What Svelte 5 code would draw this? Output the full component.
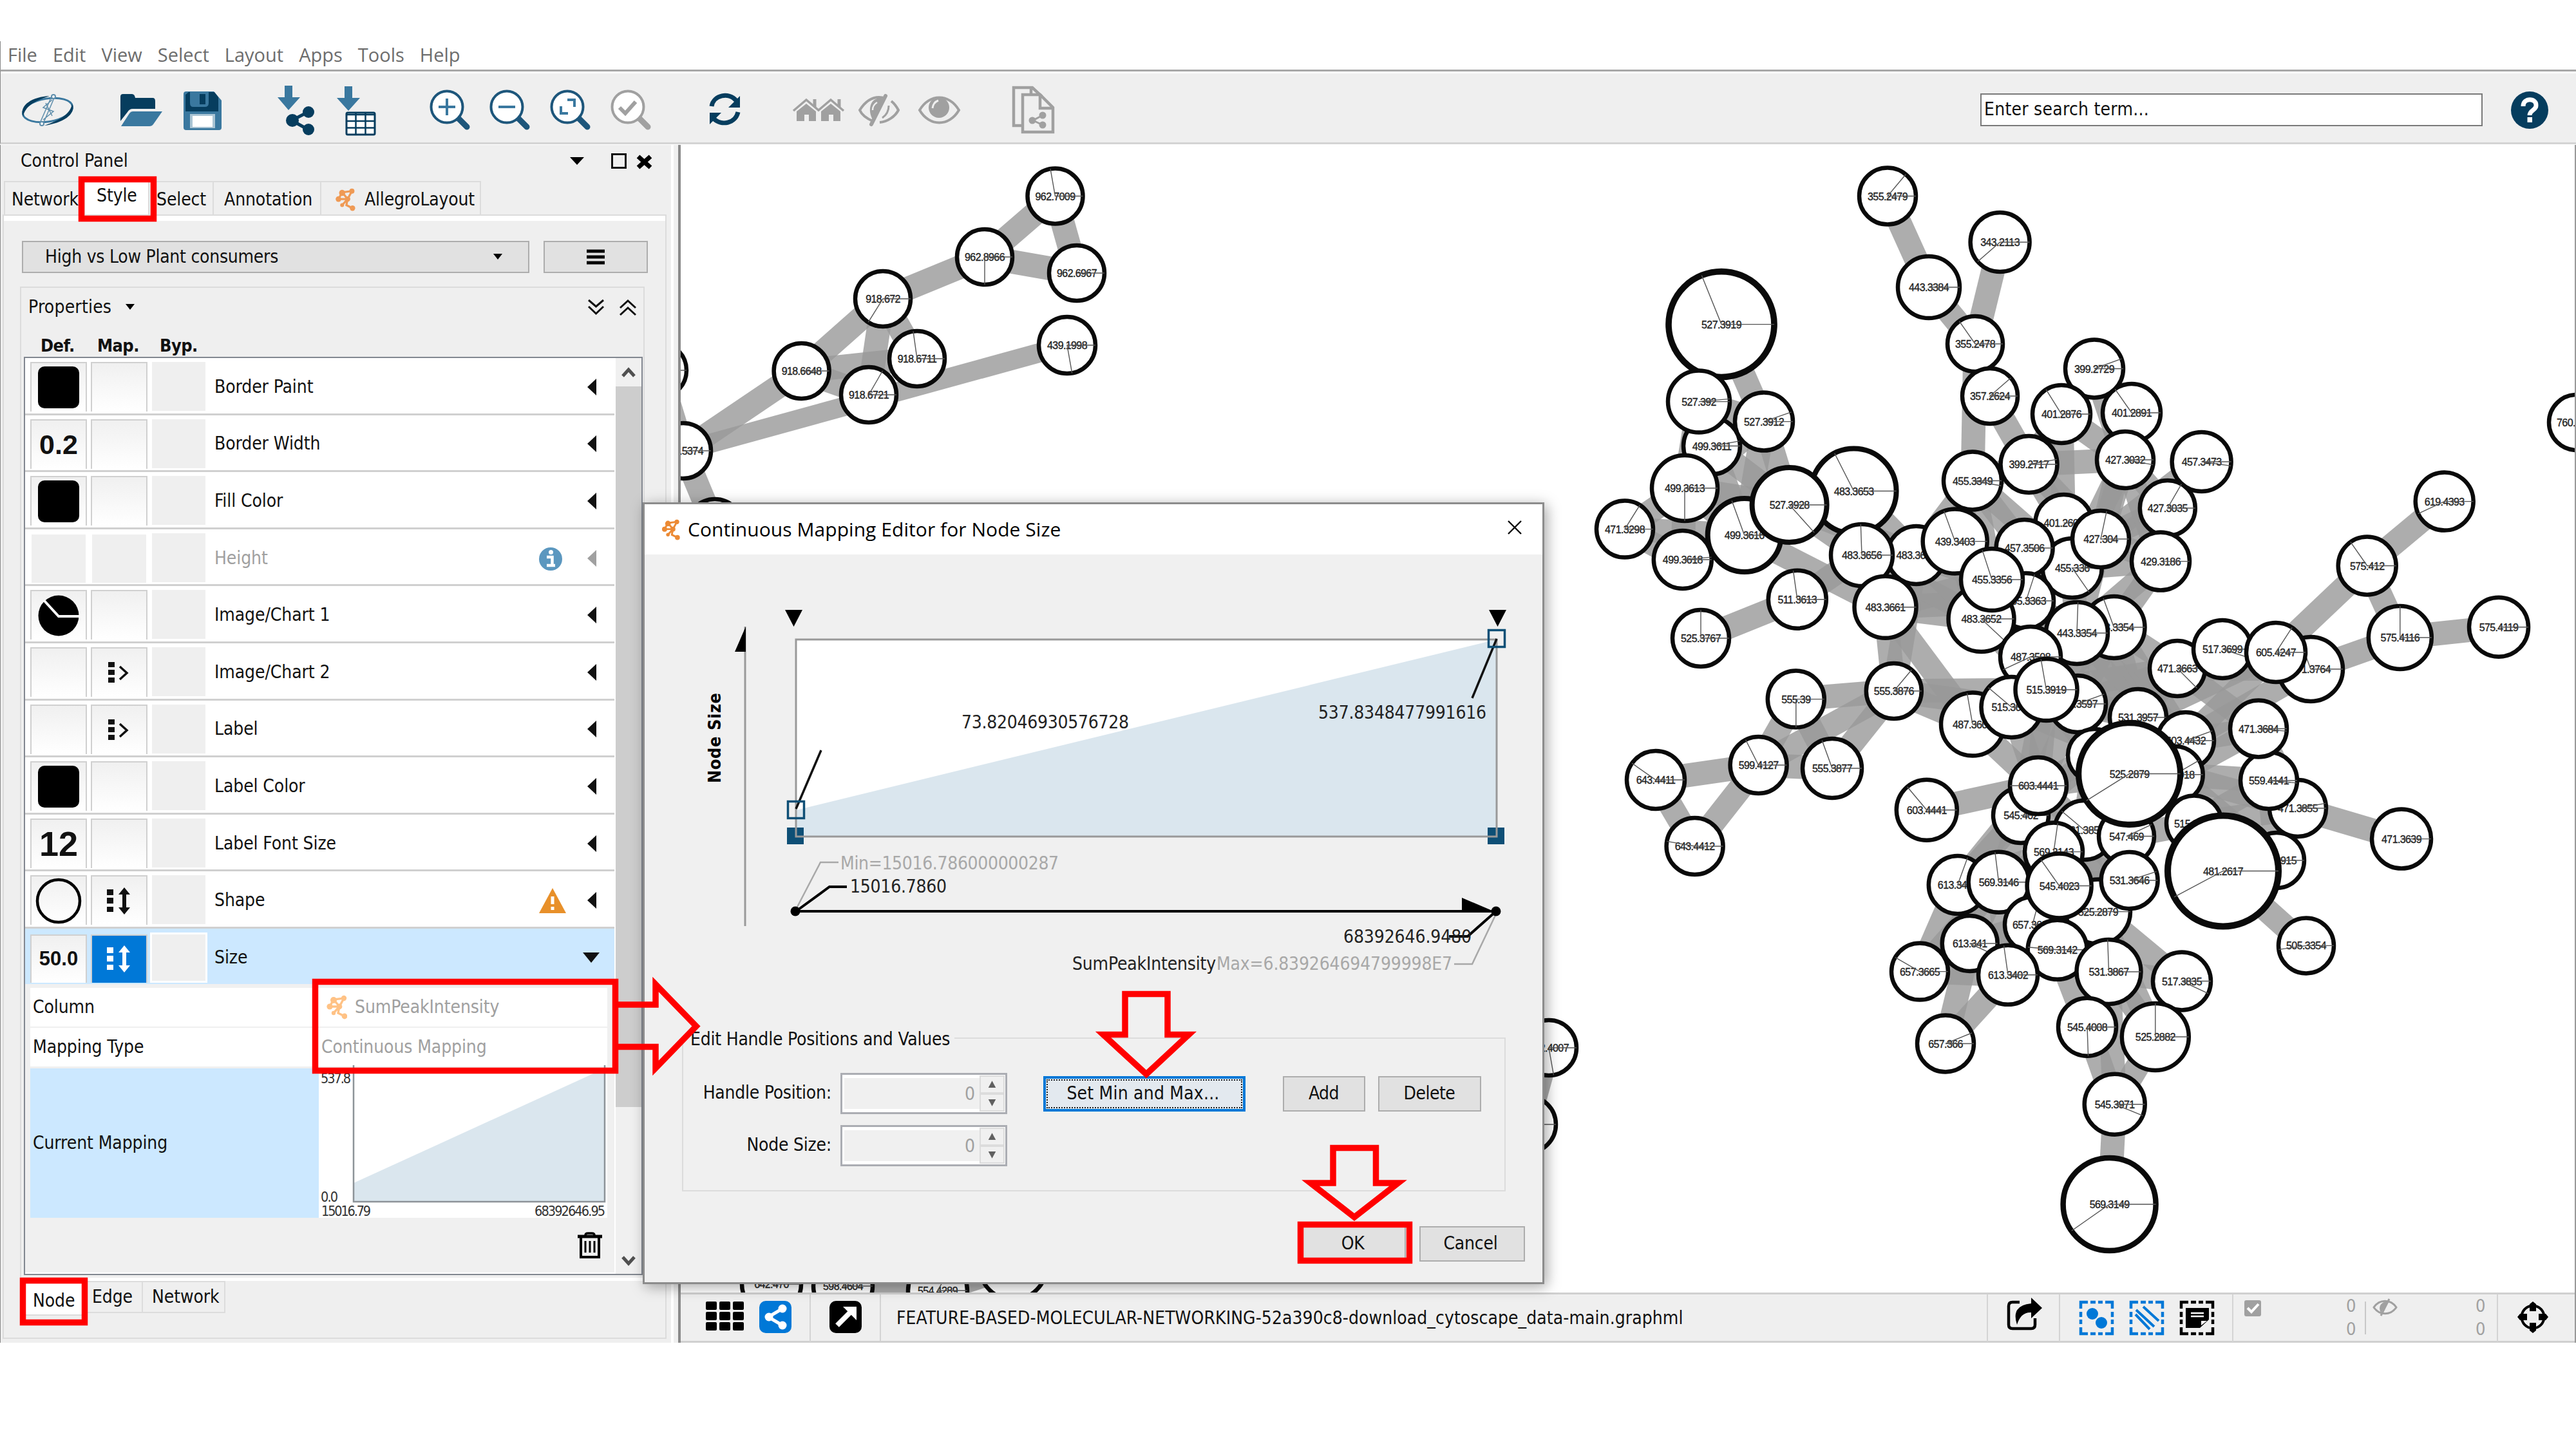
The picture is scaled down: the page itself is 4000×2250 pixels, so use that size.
<script>
  const menus = ['File', 'Edit', 'View', 'Select', 'Layout', 'Apps', 'Tools', 'Help'];

  // def: swatch | pie | circle | text, map: pass (passthrough) or cont (continuous)
  const rows = [
    { name: 'Border Paint', def: 'swatch' },
    { name: 'Border Width', def: 'text', value: '0.2', cls: 'n44' },
    { name: 'Fill Color', def: 'swatch' },
    { name: 'Height', def: 'off', off: true, badge: 'info' },
    { name: 'Image/Chart 1', def: 'pie' },
    { name: 'Image/Chart 2', def: '', map: 'pass' },
    { name: 'Label', def: '', map: 'pass' },
    { name: 'Label Color', def: 'swatch' },
    { name: 'Label Font Size', def: 'text', value: '12', cls: 'n55' },
    { name: 'Shape', def: 'circle', map: 'cont', badge: 'warn' },
    { name: 'Size', def: 'text', value: '50.0', cls: 'n32', map: 'cont', sel: true }
  ];

  // id, label, x, y, radius, angle of the second chart line; order is stacking order
  const nodes = [
    ['a0', '', 1023, 575, 43, 0], ['a9', '', 1110, 818, 43, 0],
    ['a1', '962.7009', 1638.5, 304.5, 43, -100], ['a2', '962.8966', 1529, 399, 43, 90],
    ['a3', '962.6967', 1672, 424, 43, 0], ['a4', '918.672', 1371, 464, 43, 122],
    ['a5', '918.6711', 1424, 557, 43, -98], ['a6', '918.6648', 1244.6, 576, 43, 0],
    ['a7', '918.6721', 1349, 613, 43, -60], ['a8', '439.1998', 1657, 536, 44, 80],
    ['a10', '918.5374', 1061, 700, 43, 0],
    ['z1', '642.470', 1198, 1994, 46, 0], ['z2', '598.4604', 1309, 1997, 46, 0],
    ['z3', '554.4289', 1456, 2004, 46, -60], ['z4', '', 1573, 1966, 52, 0],
    ['z5', '642.4007', 2405, 1627, 43, 80], ['z6', '', 2372, 1746, 44, 0],
    ['b1', '355.2479', 2931, 304.5, 44, -50], ['b2', '343.2113', 3105.6, 376, 46, 139],
    ['b3', '443.3384', 2995, 446, 48, 0], ['b5', '355.2478', 3067, 534, 43, -125],
    ['b6', '357.2624', 3090, 615, 43, -41],
    ['c1', '527.3919', 2673, 503.6, 82, -112], ['c4', '499.3611', 2658, 692.5, 44, -10],
    ['c2', '527.392', 2638, 623.6, 48, -5], ['c3', '527.3912', 2739, 654.6, 45, -19],
    ['c5', '499.3613', 2616, 758, 51, 90], ['c6', '471.3298', 2523, 821.6, 44, -58],
    ['c8', '499.3618', 2612.8, 869, 45, -5], ['c7', '499.3616', 2708.7, 831, 57, -110],
    ['c9', '483.3653', 2878.6, 762.5, 66, -117], ['c10', '527.3928', 2778.6, 784, 58, 48],
    ['d2', '483.3657', 2975.5, 862, 45, 0], ['d1', '483.3656', 2891, 862, 48, -92],
    ['d3', '483.3661', 2927.5, 942.8, 48, 0], ['d4', '511.3613', 2790.8, 930.7, 45, -98],
    ['d5', '525.3767', 2641, 991, 44, -90],
    ['e1', '399.2729', 3252, 572.5, 45, -20], ['e3', '401.2891', 3310, 641, 45, -125],
    ['e2', '401.2876', 3201, 643, 45, -122], ['e4', '399.2717', 3150.5, 721, 44, -10],
    ['e5', '427.3032', 3300, 714, 44, 10], ['e6', '457.3473', 3418.6, 717, 46, 8],
    ['e7', '455.3349', 3063, 746.5, 45, 10], ['e9', '427.3035', 3365.8, 789, 43, -60],
    ['e10', '429.3186', 3355, 871.6, 45, 0],
    ['f1', '401.2607', 3204.5, 812, 44, 0], ['f2', '455.336', 3217.7, 882, 46, 55],
    ['f3', '427.304', 3262, 837, 44, -78], ['f4', '457.3506', 3143.6, 851, 44, 0],
    ['f5', '439.3403', 3035.7, 840.6, 50, -110], ['f6', '455.3363', 3146, 933, 43, -72],
    ['f7', '483.3652', 3076.5, 961, 51, 43], ['f8', '455.3356', 3093, 900, 48, -108],
    ['f10', '443.3354', 3282.5, 974, 48, -110], ['f9', '443.3354', 3225, 983, 48, -88],
    ['f11', '487.3508', 3153, 1020, 47, 155],
    ['g1', '487.3607', 3063, 1124.6, 49, -100], ['g2', '515.3604', 3123.5, 1098, 47, -140],
    ['g3', '515.3597', 3226, 1093, 44, -20], ['g4', '515.3919', 3177.5, 1071, 48, -100],
    ['h1', '471.3663', 3381, 1038, 43, 45], ['h2', '517.3699', 3451, 1008, 45, 18],
    ['h3', '471.3764', 3588, 1039, 50, -110], ['h4', '605.4247', 3534, 1013, 46, -57],
    ['h5', '575.412', 3675.7, 878.5, 45, -125], ['h6', '619.4393', 3795.7, 778.6, 45, 155],
    ['h7', '575.4116', 3726.8, 990, 49, -90], ['h8', '575.4119', 3880, 973.7, 46, 0],
    ['h9', '760.5402', 4001, 656, 43, 0],
    ['i1', '555.39', 2788.8, 1085.6, 44, 90], ['i2', '555.3876', 2940.8, 1073, 43, -50],
    ['i3', '599.4127', 2730.6, 1188, 44, -117], ['i4', '555.3877', 2845, 1193, 46, -110],
    ['i5', '643.4411', 2571, 1211, 45, -145], ['i6', '643.4412', 2631.6, 1314, 44, -170],
    ['i7', '603.4441', 2991.8, 1257.8, 47, -130],
    ['j1', '531.3957', 3320, 1114, 44, 0], ['j2', '603.4432', 3394, 1150, 44, -20],
    ['j3', '', 3252, 1173, 41, 0], ['j4', '515.3918', 3376.7, 1202.7, 44, -30],
    ['j5', '545.402', 3138, 1266, 43, 0], ['j6', '603.4441', 3165, 1220, 44, 180],
    ['j7', '471.3855', 3568, 1255, 44, -10], ['j8', '559.4141', 3523, 1212, 44, 5],
    ['j9', '471.3684', 3507, 1131.5, 44, 5], ['j10', '471.3639', 3729, 1302.6, 46, 0],
    ['k1', '515.3915', 3407, 1278.5, 43, 0], ['k2', '559.3915', 3535, 1336, 43, 0],
    ['k4', '531.3854', 3236.6, 1289, 46, -140], ['k5', '547.469', 3302, 1298.5, 43, -25],
    ['k3', '525.2879', 3306.6, 1201.5, 79, 148],
    ['k6', '569.3143', 3189, 1322.6, 45, -82], ['k7', '525.2879', 3258, 1415.6, 50, 180],
    ['k8', '481.2617', 3452, 1352.5, 86, 152],
    ['l1', '613.3407', 3039.8, 1374, 45, -70], ['l2', '569.3146', 3103.6, 1369.7, 47, -97],
    ['l3', '657.3604', 3156, 1435.7, 43, -75], ['l4', '545.4023', 3197.6, 1375.5, 50, -125],
    ['l5', '531.3646', 3306.6, 1367, 44, -18], ['l6', '613.341', 3058.7, 1465, 43, 25],
    ['l7', '657.3665', 2981, 1508.6, 44, -150], ['l9', '569.3142', 3194.7, 1474.8, 46, -175],
    ['l8', '613.3402', 3118, 1513.8, 46, -98], ['l10', '657.366', 3021, 1620.5, 44, -22],
    ['m1', '531.3867', 3274.5, 1509, 50, -92], ['m2', '517.3835', 3388, 1523.5, 45, 25],
    ['m3', '505.3354', 3581, 1468.4, 43, 172], ['m4', '545.4008', 3241, 1594.7, 45, 88],
    ['m5', '525.2882', 3346.8, 1610, 52, -90], ['m6', '545.3971', 3283.7, 1714.7, 47, 22],
    ['m7', '569.3149', 3275.6, 1870, 72, 145]
  ];

  const at = Object.fromEntries(nodes.map((n) => [n[0], n]));

  const links = `a1-a2 a1-a3 a2-a3 a2-a4 a4-a6 a4-a7 a4-a5 a6-a5 a6-a7 a6-a10 a0-a10 a10-a9
    z2-z3 z3-z4 z5-z6
    b1-b3 b3-b5 b2-b5 b5-b6 b5-e7 b6-e4
    c1-c2 c1-c3 c2-c3 c2-c4 c3-c4 c4-c5 c3-c5 c3-c10 c4-c10 c5-c10 c5-c7 c5-c6 c5-c8 c6-c8 c7-c8 c7-c10 c4-c7 c3-c7 c2-c5 c6-c7
    c9-c10 c9-d1 c10-d1 c10-d2 c7-d3 c9-d2 d1-d3 d2-d3 d4-d5 d4-d1 d3-i2 d2-i2 d3-g1 d3-f7
    d3-f8 d3-f6 d1-f7 d1-f5 d2-f8 d2-f7 f5-f7 f5-f8 e7-f5 e7-d2 e7-f4 e7-f8 e7-f2
    e1-e5 e1-e2 e1-e3 e2-e5 e2-e4 e2-f1 e3-e5 e3-f3 e4-e5 e4-e7 e4-f1 e4-f3 e5-f3 e5-e9 e6-e9 e6-f3
    e9-f3 e9-e10 e9-f2 e10-f3 e10-f2 e10-f10 e10-f9 e5-e10 e5-f2 f1-f4 f1-f2 f2-f4 f2-f6 f2-f9 f3-f9 f3-f6 f4-f6 f4-f8 f2-f8
    f6-f7 f6-f9 f6-f11 f7-f11 f7-f9 f8-f9 f9-f11 f10-g4 f10-g3 f10-j1 f9-g3 f9-g4 f11-g4 f11-g2 f7-g4
    g1-g2 g1-g4 g2-g4 g2-g3 g4-g3 i2-g1 i2-g2 i2-g4 g3-j1 g4-j1 g4-j3 g2-j6 g1-j6 g4-j6 g4-j5 g3-j3 g3-j6 g2-j4 g4-h1 g3-h1
    f10-h1 h1-h2 h2-h4 h1-h4 h2-h3 h1-h3 h4-h3 h4-h5 h5-h6 h5-h7 h3-h7 h7-h8 h4-j2 h4-j1 h1-j9 h1-j1 h3-j2
    f9-j1 f9-j2 f10-j2 j1-j2 j1-j3 j2-j4 j3-j4 j2-j9 j4-j9 j4-j8 j4-j7 j4-k1 j8-j9 j7-j9 j7-j8 j8-k1 j7-k1 j7-k2 j8-k2 k1-k2 j7-j10 j4-k2
    i1-i2 i1-i3 i1-i4 i2-i4 i2-i3 i3-i4 i3-i5 i3-i6 i5-i6 i7-j6
    j3-j6 j3-j5 j3-k4 j6-j5 j6-k4 j5-k4 j5-k6 k4-k5 k3-k4 k3-j6 k3-k6 k5-k1 k5-l5 k4-l5 k4-k6 k6-l5 k6-k7 k4-k7 k3-l4
    j5-l1 j5-l2 j6-l1 k6-l2 k6-l1 k6-l4 l1-l2 l1-l6 l1-l7 l2-l6 l2-l7 l2-l3 l2-l8 l4-l5 l3-l4 l4-k7 l3-k7 l3-l9 l6-l8 l6-l7 l7-l8
    l6-l10 l8-l10 l3-l8 l6-l3 l9-l8 l9-m1 l9-m4 l9-k7 k7-m1 k7-m2 l5-k7 m1-m4 m1-m2 m1-m5 m2-m5 m4-m6 m5-m6 m1-m6 m6-m7 k8-m3 k7-m5`
    .trim().split(/\s+/).map((s) => s.split('-'));

  const ring = (r) => (r > 70 ? r / 8.5 : r > 55 ? 8 : 6.5);
  const rad = Math.PI / 180;
</script>

{#snippet orange(cls)}
  <svg class={cls} viewBox="0 0 32 38">
    <path d="M5 18 L11 7 L27 5 L20 18 L5 18 M11 7 L20 18 L18 28 L28 33 M11 28 L20 18" fill="none" stroke="currentColor" stroke-width="3.4" />
    <circle cx="5" cy="18" r="4.6" fill="currentColor" /><circle cx="11" cy="8" r="5" fill="currentColor" />
    <circle cx="27" cy="5" r="4.2" fill="currentColor" /><circle cx="20" cy="18" r="4.4" fill="currentColor" />
    <circle cx="28" cy="33" r="4.4" fill="currentColor" /><circle cx="11" cy="28" r="3.2" fill="currentColor" />
  </svg>
{/snippet}

{#snippet lens(cx, color)}
  <path d="M{cx + 17} 183 L{cx + 31} 197" stroke={color} stroke-width="9" stroke-linecap="round" />
  <circle {cx} cy="166" r="24.5" fill="#fff" stroke={color} stroke-width="4" />
{/snippet}

{#snippet spin()}
  <div class="spin">
    <div class="field">0</div>
    <div class="arrows">
      <svg viewBox="0 0 39 27"><path d="M13 19 L19.500 7 L26 19Z" fill="#606060" /></svg>
      <svg viewBox="0 0 39 27"><path d="M13 8 L19.500 20 L26 8Z" fill="#606060" /></svg>
    </div>
  </div>
{/snippet}

<div class="page">
  <nav class="menu">
    {#each menus as label}<span>{label}</span>{/each}
  </nav>

  <header class="tools">
    <svg width="150" height="110" viewBox="0 114 150 110" fill="none">
      <ellipse cx="73" cy="171" rx="39" ry="18" transform="rotate(-9 73 171)" stroke="#3a789f" stroke-width="3" />
      <path d="M35 181 C28 163 50 150 76 149 C52 157 38 165 35 181Z M111 161 C118 178 96 191 68 195 C92 186 108 178 111 161Z" fill="#063d5e" />
      <path d="M84 150 L66 192 M79 150 L61 191 M80 155 L66 167 L82 173 L66 186 M70 160 L80 180" stroke="#5d8dab" stroke-width="1.500" />
      <circle cx="82" cy="150" r="3" stroke="#5d8dab" stroke-width="2" fill="#fff" /><circle cx="64" cy="192" r="3" stroke="#5d8dab" stroke-width="2" fill="#fff" />
    </svg>
    <svg width="115" height="110" viewBox="150 114 115 110">
      <path d="M186 150 Q186 146 190 146 H204 Q208 146 209 152 H236 Q240 152 240 157 V169 H205 Q200 169 197 174 L186 188Z" fill="#063d5e" />
      <path d="M205 173 H251 L237 193 Q235 196 231 196 H187 L200 176 Q202 173 205 173Z" fill="#3a789f" />
    </svg>
    <svg width="115" height="110" viewBox="265 114 115 110">
      <path d="M288 142 H331 L343 156 V198 Q343 202 339 202 H288 Q284 202 284 198 V146 Q284 142 288 142Z" fill="#3a789f" />
      <path d="M292 143 H332 L338 151 V173 H287 V147Z" fill="#063d5e" />
      <path d="M294 143 H323 V160 Q323 166 317 166 H299 Q294 166 294 160Z" fill="#3a789f" /><rect x="309" y="146" width="9" height="16" fill="#063d5e" />
      <rect x="294" y="177" width="39" height="22" fill="#a9c4d4" /><rect x="298" y="180" width="31" height="17" fill="#fff" />
    </svg>
    <svg width="125" height="110" viewBox="380 114 125 110">
      <path d="M441 133 H453 V151 H465 L447 171 L430 151 H441Z" fill="#3a789f" />
      <path d="M479 173 L452 187 L479 202" stroke="#063d5e" stroke-width="5" fill="none" />
      <circle cx="478" cy="174" r="9" fill="#063d5e" /><circle cx="453" cy="187" r="10" fill="#063d5e" /><circle cx="478" cy="201" r="9" fill="#063d5e" />
    </svg>
    <svg width="115" height="110" viewBox="505 114 115 110">
      <path d="M534 134 H546 V152 H558 L540 172 L522 152 H534Z" fill="#3a789f" />
      <rect x="537" y="175" width="44" height="34" rx="2" fill="#fff" stroke="#063d5e" stroke-width="3" />
      <path d="M537 178 H581 M537 188 H581 M537 198.500 H581 M551.500 175 V209 M566.500 175 V209" stroke="#063d5e" stroke-width="2.500" />
    </svg>
    <svg width="120" height="110" viewBox="620 114 120 110">{@render lens(693, '#1d567b')}<path d="M680 166 H706 M693 153 V179" stroke="#3a789f" stroke-width="4" /></svg>
    <svg width="94" height="110" viewBox="740 114 94 110">{@render lens(786, '#1d567b')}<path d="M773 166 H799" stroke="#3a789f" stroke-width="4" /></svg>
    <svg width="94" height="110" viewBox="834 114 94 110">{@render lens(880, '#1d567b')}<path d="M880 155 H891 V166 M870 165 V176 H881" stroke="#3a789f" stroke-width="4" fill="none" /></svg>
    <svg width="132" height="110" viewBox="928 114 132 110">{@render lens(974, '#a0a0a0')}<path d="M961 167 L970 176 L986 158" stroke="#a0a0a0" stroke-width="6" fill="none" /></svg>
    <svg width="130" height="110" viewBox="1061 114 130 110">
      <path d="M1105 165 C1108 147 1132 143 1143 156 M1146 174 C1142 192 1120 196 1108 184" stroke="#063d5e" stroke-width="7" fill="none" />
      <path d="M1149 149 V167 H1131Z M1102 193 V175 H1120Z" fill="#063d5e" />
    </svg>
    <svg width="130" height="110" viewBox="1191 114 130 110" stroke="#a0a0a0" fill="none">
      {#each [0, 38] as o}
        <path d="M{1232 + o} 172 L{1252 + o} 155 L{1272 + o} 172" stroke-width="3.500" /><path d="M{1265 + o} 166 V154" stroke-width="5" />
        <path d="M{1237 + o} 173 L{1252 + o} 161 L{1267 + o} 173 V188 H{1256 + o} V178 H{1249 + o} V188 H{1237 + o}Z" fill="#a0a0a0" stroke="none" />
      {/each}
    </svg>
    <svg width="91" height="110" viewBox="1321 114 91 110" stroke="#a0a0a0" fill="none" stroke-width="4">
      <path d="M1355 188 C1346 184 1338 178 1335 171 C1345 155 1357 151 1365 151 C1369 151 1372 152 1374 153 M1384 157 C1389 161 1393 167 1395 171 C1390 181 1378 189 1366 190" />
      <path d="M1374 155 L1356 187 C1348 176 1348 154 1366 152Z" fill="#a0a0a0" stroke="none" />
      <path d="M1375 149 L1353 193" stroke-width="6" stroke-linecap="round" /><path d="M1380 164 C1380 174 1376 179 1370 183" stroke-width="3" /><path d="M1362 159 Q1355 163 1355 171" stroke="#efefef" stroke-width="2.500" />
    </svg>
    <svg width="129" height="110" viewBox="1412 114 129 110">
      <path d="M1428 171 C1443 145 1474 145 1489 171 C1474 197 1443 197 1428 171Z" fill="none" stroke="#a0a0a0" stroke-width="4" />
      <circle cx="1458" cy="167" r="16" fill="#a0a0a0" /><path d="M1457 156 Q1449 159 1448 168" fill="none" stroke="#efefef" stroke-width="3" />
    </svg>
    <svg width="140" height="110" viewBox="1541 114 140 110" fill="none" stroke="#a0a0a0" stroke-width="4.500">
      <path d="M1586 195 H1574 V136 H1603 L1618 150 M1601 137 V147" /><path d="M1588 147 H1615 L1635 167 V205 H1588Z M1615 147 V168 H1635" />
      <path d="M1619 179 L1604 187 L1619 194" stroke-width="3" /><circle cx="1619" cy="179" r="5.500" fill="#a0a0a0" stroke="none" /><circle cx="1603" cy="187" r="5.500" fill="#a0a0a0" stroke="none" /><circle cx="1619" cy="194" r="5.500" fill="#a0a0a0" stroke="none" />
    </svg>
    <div class="search">Enter search term...</div>
    <svg class="help" width="64" height="64" viewBox="0 0 64 64"><circle cx="32" cy="32" r="29" fill="#063d5e" /><path d="M22 26 C22 12 43 13 42 25 C42 32 32 32 32 40" fill="none" stroke="#fff" stroke-width="7" /><rect x="28.500" y="43" width="7.500" height="8" fill="#fff" /></svg>
  </header>

  <main>
    <aside>
      <div class="phead">
        <span>Control Panel</span>
        <svg width="170" height="56" viewBox="870 225 170 56"><path d="M885 244 H907 L896 256Z" /><rect x="950.500" y="239.500" width="21" height="21" fill="none" stroke="#111" stroke-width="3" /><path d="M991 243 L1010 260 M1010 243 L991 260" stroke="#000" stroke-width="7" /></svg>
      </div>
      <div class="tabs">
        <span class="t1">Network</span><span class="t2">Style</span><span class="t3">Select</span><span class="t4">Annotation</span>
        <span class="t5">{@render orange('allegro')}AllegroLayout</span>
      </div>
      <div class="body">
        <div class="combos">
          <div class="combo"><span>High vs Low Plant consumers</span><svg width="16" height="10" viewBox="0 0 16 10"><path d="M1 0 H15 L8 9Z" /></svg></div>
          <div class="burger"><svg width="28" height="24" viewBox="0 0 28 24"><path d="M0 3 H28 M0 12 H28 M0 21 H28" stroke="#000" stroke-width="5" /></svg></div>
        </div>
        <div class="props">
          <div class="ptitle">
            <span>Properties</span><svg width="16" height="10" viewBox="0 0 16 10"><path d="M1 0 H15 L8 9Z" /></svg>
            <svg class="chev" width="80" height="28" viewBox="910 461 80 28" fill="none" stroke="#111" stroke-width="3"><path d="M914 464 L925.500 474 L937 464 M914 474 L925.500 485 L937 474 M963 476 L975 465 L987 476 M963 487 L975 476 L987 487" /></svg>
          </div>
          <div class="cols"><b>Def.</b><b>Map.</b><b>Byp.</b></div>
          <div class="table">
            <div class="list">
              {#each rows as r}
                <div class={['row', r.sel && 'sel', r.off && 'off', r.badge && 'badged']}>
                  <div class="cell">
                    {#if r.def === 'swatch'}<i class="swatch"></i>
                    {:else if r.def === 'text'}<b class={r.cls}>{r.value}</b>
                    {:else if r.def === 'pie'}<svg width="66" height="66" viewBox="0 0 66 66"><circle cx="33" cy="33" r="31.500" /><path d="M10 9 L33 34 H66" stroke="#fff" stroke-width="4" fill="none" /></svg>
                    {:else if r.def === 'circle'}<svg width="72" height="72" viewBox="0 0 72 72"><circle cx="36" cy="36" r="33" fill="none" stroke="#000" stroke-width="4.500" /></svg>{/if}
                  </div>
                  <div class={['cell', r.sel && 'on']}>
                    {#if r.map}
                      <svg width="40" height="44" viewBox="0 0 40 44" fill="none" stroke="currentColor">
                        <path d={r.map === 'pass' ? 'M8 6 V14 M8 18 V26 M8 30 V38' : 'M6 4 V13 M6 17 V26 M6 31 V39'} stroke-width="10" />
                        {#if r.map === 'pass'}<path d="M21 13 L32 23 L21 33" stroke-width="3.500" />
                        {:else}<path d="M28 8 V36" stroke-width="6" /><path d="M19 12 L28 1 L37 12Z M19 32 L28 43 L37 32Z" fill="currentColor" stroke="none" />{/if}
                      </svg>
                    {/if}
                  </div>
                  <div class="byp"></div>
                  <span>{r.name}</span>
                  {#if r.badge === 'info'}
                    <svg class="badge" width="38" height="38" viewBox="0 0 38 38"><circle cx="19" cy="19" r="18" fill="#5b97bf" /><path d="M13 16 H21.500 V28 M13 29 H26" stroke="#fff" stroke-width="4.500" fill="none" /><circle cx="19.500" cy="8.500" r="3.500" fill="#fff" /></svg>
                  {:else if r.badge}
                    <svg class="badge" width="44" height="40" viewBox="0 0 44 40"><path d="M22 0 L43 39 H1Z" fill="#e8902a" /><path d="M22 13 V25 M22 29 V34" stroke="#fff" stroke-width="5" /></svg>
                  {/if}
                  <svg class="tri" width="28" height="28" viewBox="0 0 28 28"><path d={r.sel ? 'M1 6 H27 L14 22Z' : 'M22 1 V27 L8 14Z'} fill="currentColor" /></svg>
                </div>
              {/each}
              <div class="detail">
                <div class="line"><span>Column</span><em>{@render orange('cyt')}SumPeakIntensity</em></div>
                <div class="line"><span>Mapping Type</span><em>Continuous Mapping</em></div>
                <div class="line cur">
                  <span>Current Mapping</span>
                  <svg width="448" height="232" viewBox="495 1660 448 232" class="mini">
                    <path d="M549 1838 L939 1660 V1867 H549Z" fill="#dae6ee" /><path d="M549 1655 V1867 H939 V1655" fill="none" stroke="#8d9398" stroke-width="2.500" />
                    <text x="498" y="1683" textLength="47">537.8</text><text x="498" y="1867" textLength="27">0.0</text>
                    <text x="499" y="1889" textLength="77">15016.79</text><text x="830" y="1889" textLength="110">68392646.95</text>
                  </svg>
                </div>
                <svg class="trash" width="38" height="42" viewBox="0 0 38 42" fill="none" stroke="#000"><path d="M0 7 H38" stroke-width="5" /><path d="M12 5 Q12 2 16 2 H22 Q26 2 26 5" stroke-width="3.500" /><path d="M5 8 V39 H33 V8" stroke-width="4" /><path d="M12 14 V32 M19 14 V32 M26 14 V32" stroke-width="3" /></svg>
              </div>
            </div>
            <div class="scroll">
              <svg width="40" height="44" viewBox="0 0 40 44"><path d="M11 28 L20 18 L29 28" fill="none" stroke="#505050" stroke-width="5" /></svg>
              <div class="thumb"></div>
              <svg class="down" width="40" height="44" viewBox="0 0 40 44"><path d="M11 18 L20 28 L29 18" fill="none" stroke="#505050" stroke-width="5" /></svg>
            </div>
          </div>
        </div>
        <div class="btabs"><span class="bn">Node</span><span class="be">Edge</span><span class="bw">Network</span></div>
      </div>
    </aside>

    <section>
      <svg class="net" width="2941" height="1782" viewBox="1057 225 2941 1782">
        <g stroke="#999" stroke-opacity=".8" stroke-width="37">
          <path d="M1657 536 L1061 700" stroke-width="30" />
          {#each links as [a, b]}<path d="M{at[a][2]} {at[a][3]} L{at[b][2]} {at[b][3]}" />{/each}
        </g>
        {#each nodes as [, label, x, y, r, ang]}
          <circle cx={x} cy={y} {r} fill="#fff" stroke="#0a0a0a" stroke-width={ring(r)} />
          {#if label}<text {x} y={y + 6}>{label}</text>{/if}
          <path d="M{x + r} {y} H{x} L{x + r * Math.cos(ang * rad)} {y + r * Math.sin(ang * rad)}" fill="none" stroke="#555" stroke-width="1.400" />
        {/each}
      </svg>
      <footer>
        <svg width="202" height="74" viewBox="1057 2009 202 74">
          {#each [0, 1, 2] as i}{#each [0, 1, 2] as j}<rect x={1096 + i * 21} y={2020 + j * 16} width="17" height="13" rx="2" />{/each}{/each}
          <rect x="1179" y="2019" width="50" height="50" rx="10" fill="#0078d7" /><path d="M1215 2031 L1193 2044 L1215 2057" stroke="#fff" stroke-width="5" fill="none" />
          <circle cx="1215" cy="2031" r="6.500" fill="#fff" /><circle cx="1194" cy="2044" r="6.500" fill="#fff" /><circle cx="1215" cy="2057" r="6.500" fill="#fff" />
        </svg>
        <svg class="sep" width="109" height="74" viewBox="1259 2009 109 74"><rect x="1288" y="2019" width="50" height="50" rx="10" /><path d="M1300 2057 L1322 2035" stroke="#fff" stroke-width="8" /><path d="M1309 2028 H1330 V2049Z" fill="#fff" /></svg>
        <div class="file sep">FEATURE-BASED-MOLECULAR-NETWORKING-52a390c8-download_cytoscape_data-main.graphml</div>
        <svg class="sep" width="112" height="74" viewBox="3087 2009 112 74"><path d="M3136 2021 H3125 Q3119 2021 3119 2027 V2056 Q3119 2062 3125 2062 H3154 Q3160 2062 3160 2056 V2046" fill="none" stroke="#000" stroke-width="4.500" /><path d="M3154 2014 L3171 2030 L3154 2046 V2037 Q3138 2036 3132 2056 Q3122 2026 3154 2023Z" /></svg>
        <svg class="sep" width="269" height="74" viewBox="3199 2009 269 74" fill="none">
          {#each [[3231, '#0078d7'], [3309, '#0078d7'], [3387, '#000']] as [x, c]}
            <path d="M{x} 2031 V2021 H{x + 11} M{x + 15} 2021 H{x + 23} M{x + 27} 2021 H{x + 34} M{x + 38} 2021 H{x + 49} V2031 M{x + 49} 2036 V2044 M{x + 49} 2048 V2055 M{x + 49} 2060 V2070 H{x + 38} M{x + 34} 2070 H{x + 27} M{x + 23} 2070 H{x + 15} M{x + 11} 2070 H{x} V2060 M{x} 2055 V2048 M{x} 2044 V2036" stroke={c} stroke-width="4.500" />
          {/each}
          <circle cx="3249" cy="2039" r="9" fill="#0078d7" /><circle cx="3263" cy="2053" r="9" fill="#0078d7" />
          <path d="M3316 2040 L3338 2063 M3317 2033 L3345 2059 M3328 2028 L3352 2050" stroke="#0078d7" stroke-width="4" />
          <path d="M3394 2030 H3430 V2048 L3416 2061 H3394Z" fill="#000" /><path d="M3402 2038 H3422 M3402 2043 H3422" stroke="#fff" stroke-width="2.500" /><path d="M3418 2057 V2050 H3427Z" fill="#fff" />
        </svg>
        <svg class="sep cnt" width="411" height="74" viewBox="3468 2009 411 74">
          <rect x="3485" y="2018" width="26" height="25" rx="3" fill="#a0a0a0" /><path d="M3490 2030 L3496 2036 L3507 2024" fill="none" stroke="#fff" stroke-width="4" />
          <text x="3643" y="2036">0</text><text x="3643" y="2072">0</text><text x="3844" y="2036">0</text><text x="3844" y="2072">0</text>
          <path d="M3673 2020 V2071" stroke="#c8c8c8" stroke-width="2" />
          <path d="M3686 2029 C3695 2016 3712 2016 3721 2029 C3712 2042 3695 2042 3686 2029Z M3710 2016 L3697 2042" fill="none" stroke="#a0a0a0" stroke-width="3" /><path d="M3709 2019 L3697 2038 Q3690 2022 3709 2019Z" fill="#a0a0a0" />
        </svg>
        <svg class="sep" width="119" height="74" viewBox="3879 2009 119 74"><circle cx="3933" cy="2044" r="17.500" fill="none" stroke="#000" stroke-width="4" /><path d="M3933 2020 L3938 2024 V2035 H3928 V2024Z M3933 2069 L3938 2065 V2053 H3928 V2065Z M3909 2044 L3913 2039 H3924 V2049 H3913Z M3957 2044 L3953 2039 H3942 V2049 H3953Z" /></svg>
      </footer>
    </section>
  </main>

  <div class="dialog">
    <div class="title">{@render orange('tic')}<span>Continuous Mapping Editor for Node Size</span><svg class="close" width="24" height="24" viewBox="0 0 24 24"><path d="M2 2 L22 22 M22 2 L2 22" stroke="#000" stroke-width="2.300" /></svg></div>
    <svg class="chart" width="1394" height="720" viewBox="1001 861 1394 720">
      <rect x="1236" y="993" width="1088" height="306" fill="#fff" />
      <path d="M1236 1258 L2324 993 V1299 H1236Z" fill="#dae6ee" />
      <path d="M1219 947 H1246 L1232.500 973Z M2312 947 H2339 L2325.500 973Z" />
      <rect x="1222" y="1285" width="26" height="26" fill="#0e4f76" /><rect x="2310" y="1285" width="26" height="26" fill="#0e4f76" />
      <rect x="1236" y="993" width="1088" height="306" fill="none" stroke="#999" stroke-width="3" />
      <path d="M1236 1256 L1275 1165 M2324 992 L2286 1084" stroke="#111" stroke-width="3.500" />
      <rect x="1223.500" y="1244.500" width="25" height="26" fill="none" stroke="#0e4f76" stroke-width="3.500" /><rect x="2311.500" y="978.500" width="25" height="26" fill="none" stroke="#0e4f76" stroke-width="3.500" />
      <path d="M1157 973 V1438" stroke="#999" stroke-width="3" /><path d="M1158 973 V1012 H1141Z" />
      <text class="ns" transform="translate(1119 1216) rotate(-90)" textLength="140">Node Size</text>
      <text x="1493" y="1131" textLength="260">73.82046930576728</text><text x="2047" y="1116" textLength="261">537.8348477991616</text>
      <path d="M1236 1412 L1274 1339 H1302 M2325 1415 L2286 1497 H2258" fill="none" stroke="#a8a8a8" stroke-width="2.500" />
      <text class="g" x="1305" y="1350" textLength="339">Min=15016.786000000287</text>
      <path d="M1236 1415 L1288 1377 H1315 M2323 1415 L2279 1454 H2250" fill="none" stroke="#000" stroke-width="4" />
      <text x="1320" y="1386" textLength="150">15016.7860</text>
      <path d="M1236 1415 H2324" stroke="#000" stroke-width="4" /><path d="M2270 1394 V1417 H2324Z" /><circle cx="1235" cy="1415" r="7.500" /><circle cx="2323" cy="1415" r="7.500" />
      <text x="2086" y="1464" textLength="199">68392646.9480</text><text x="1665" y="1506" textLength="223">SumPeakIntensity</text>
      <text class="g" x="1889" y="1506" textLength="366">Max=6.839264694799998E7</text>
    </svg>
    <fieldset>
      <legend>Edit Handle Positions and Values</legend>
      <div class="frow"><label>Handle Position:</label>{@render spin()}<div class="btn focus">Set Min and Max...</div><div class="btn add">Add</div><div class="btn del">Delete</div></div>
      <div class="frow second"><label>Node Size:</label>{@render spin()}</div>
    </fieldset>
    <div class="ok"><div class="btn">OK</div><div class="btn cancel">Cancel</div></div>
  </div>

  <svg class="marks" width="4000" height="2250" viewBox="0 0 4000 2250" fill="none" stroke="#f00" stroke-width="9.500">
    <rect x="126.500" y="278.500" width="112" height="61" />
    <rect x="35.500" y="1988.500" width="96" height="65" />
    <rect x="489.500" y="1524.500" width="466" height="138" />
    <path d="M958 1560 H1018 V1528.500 L1081 1593.500 L1018 1658.500 V1625.500 H958" />
    <path d="M1747 1543.500 H1813 V1606.500 H1846 L1780 1668 L1713 1606.500 H1747Z" />
    <path d="M2070 1782.500 H2136.500 V1837 H2171 L2103 1890 L2035 1837 H2070Z" />
    <rect x="2019.500" y="1901.500" width="169" height="56" />
  </svg>
</div>

<style>
  :global(body) { margin: 0; background: #fff; }
  .page { position: relative; width: 4000px; height: 2250px; overflow: hidden; padding-top: 64px; box-sizing: border-box; background: #fff; color: #111;
    font-family: "DejaVu Sans Condensed", "DejaVu Sans", sans-serif; font-stretch: condensed; font-size: 28px; line-height: 34px; letter-spacing: -0.1px; }
  .page :global(svg) { display: block; flex: none; }
  text { white-space: pre; }

  .menu { height: 44px; display: flex; gap: 24px; padding-left: 11px; align-items: center; color: #6d6d6d; font-family: "Open Sans", sans-serif; font-size: 29px; font-stretch: normal; letter-spacing: 0; box-sizing: border-box; padding-bottom: 2px; border-left: 1px solid #888; }
  .tools { height: 116px; box-sizing: border-box; border-top: 3px solid #a8a8a8; border-bottom: 3px solid #d4d4d4; background: #efefef; box-shadow: inset 0 3px #fff; display: flex; align-items: flex-start; padding-top: 3px; border-left: 1px solid #888; }
  .search { margin: 31px 41px 0 auto; width: 780px; height: 51px; box-sizing: border-box; background: #fff; border: 2px solid #7a7a7a; padding-left: 4px; line-height: 46px; letter-spacing: 0.25px; }
  .help { margin: 25px 40px 0 0; }

  main { display: flex; height: 1860px; background: #efefef; margin-top: 1px; }
  aside { width: 1053px; box-sizing: border-box; border-left: 1px solid #888; padding-left: 3px; background: linear-gradient(#fff, #fff) 1041px 0 / 4px 100% no-repeat; }
  .phead { height: 56px; display: flex; align-items: center; justify-content: space-between; padding: 0 13px 0 28px; }
  .phead span { padding-bottom: 6px; letter-spacing: 0; }
  .tabs { display: flex; height: 52px; padding-left: 2px; }
  .tabs span { border-top: 2px solid #dcdcdc; border-right: 2px solid #dcdcdc; box-sizing: border-box; display: flex; align-items: center; padding-bottom: 2px; padding-top: 6px; }
  .tabs .t1 { width: 126px; border-left: 2px solid #dcdcdc; padding-left: 10px; white-space: nowrap; letter-spacing: -0.2px; }
  .tabs .t2 { width: 100px; background: #fff; padding: 0 0 8px 18px; }
  .t3 { width: 100px; padding-left: 11px; }
  .t4 { width: 167px; padding-left: 16px; }
  .t5 { width: 248px; padding-left: 20px; gap: 13px; letter-spacing: -0.2px; }
  .tabs :global(.allegro) { width: 34px; height: 36px; color: #ef9a55; }
  .body { width: 1031px; height: 1746px; box-sizing: border-box; border: 2px solid #dcdcdc; box-shadow: inset 0 8px #fff; padding: 39px 0 0 26px; }
  .combos { display: flex; gap: 22px; margin-left: 2px; }
  .combo, .burger { height: 50px; box-sizing: border-box; border: 2px solid #adadad; background: #e1e1e1; display: flex; align-items: center; }
  .combo { width: 788px; justify-content: space-between; padding: 0 39px 0 34px; letter-spacing: -0.25px; }
  .burger { width: 162px; justify-content: center; }
  .props { margin: 21px 0 0 -1px; width: 970px; height: 1538px; box-sizing: border-box; border: 2px solid #dcdcdc; border-bottom: 0; padding-left: 4px; }
  .ptitle { display: flex; align-items: center; height: 60px; padding: 0 9px 0 7px; gap: 21px; letter-spacing: 0.2px; }
  .chev { margin-left: auto; }
  .cols { display: flex; height: 47px; font-size: 27px; letter-spacing: -0.6px; }
  .cols b { line-height: 60px; width: 62px; padding-left: 26px; }
  .cols b + b { width: 71px; }
  .table { width: 961px; height: 1426px; box-sizing: border-box; border: 2px solid #828790; background: #fff; display: flex; justify-content: space-between; }
  .list { width: 915px; }
  .row { height: 88.600px; box-sizing: border-box; border-bottom: 3px solid #d0d0d0; display: flex; align-items: flex-start; padding: 6px 0 0 8px; }
  .row > span { width: 520px; margin-left: 14px; align-self: center; padding-bottom: 2px; }
  .cell { width: 88px; height: 77px; box-sizing: border-box; margin-right: 6px; border: 2px solid #d0d0d0; border-bottom: 0; background: linear-gradient(#f0f0f0, #fff); display: flex; align-items: center; justify-content: center; }
  .byp { width: 83px; height: 76px; background: #efefef; margin-left: 1px; }
  .row.off .cell { border-color: #fff; background: #efefef; }
  .row.off { color: #a0a0a0; }
  .row.badged > span { width: 503px; }
  .swatch { width: 64px; height: 65px; border-radius: 10px; background: #000; }
  .cell b { font-family: "Liberation Sans", sans-serif; letter-spacing: 0; }
  .n44 { font-size: 43px; } .n55 { font-size: 54px; } .n32 { font-size: 31px; }
  .row.sel { background: #cce8ff; border-bottom-color: #cce8ff; padding-top: 9px; height: 86px; }
  .row.sel .cell { height: 75px; }
  .row.sel .cell.on { background: #0078d7; color: #fff; }
  .row.sel .byp { box-shadow: 0 0 0 3px #fff; height: 72px; }
  .badge { align-self: center; }
  .tri { align-self: center; margin: 0 22px 2px auto; }
  .detail { background: #f0f0f0; height: 448px; padding: 6px 0 0 8px; box-sizing: border-box; }
  .line { width: 896px; height: 60px; margin-bottom: 2.500px; background: #fff; display: flex; align-items: center; }
  .line > span { width: 448px; padding-left: 4px; box-sizing: border-box; }
  .line em { font-style: normal; color: #a0a0a0; display: flex; align-items: center; gap: 12px; padding-left: 4px; }
  .line em :global(.cyt) { width: 32px; height: 38px; color: #ffc285; margin-left: 8px; }
  .line.cur { height: 232px; }
  .line.cur > span { background: #cce8ff; height: 100%; line-height: 232px; }
  .mini { overflow: visible; }
  .mini text { font-size: 21.500px; fill: #333; }
  .trash { margin: 22px 0 0 850px; }
  .scroll { width: 40px; background: #f0f0f0; display: flex; flex-direction: column; }
  .thumb { height: 1119px; background: #cdcdcd; }
  .down { margin-top: auto; }
  .btabs { display: flex; margin-top: 6px; box-shadow: 0 -5px #fff; width: 968px; }
  .btabs span { height: 50px; box-sizing: border-box; border: 2px solid #dcdcdc; border-left: 0; line-height: 46px; }
  .btabs .bn { width: 102px; height: 54px; background: #fff; padding: 6px 0 0 19px; }
  .be { width: 88px; padding-left: 9px; }
  .bw { width: 128px; padding-left: 14px; }

  section { width: 2947px; box-sizing: border-box; border-left: 4px solid #8a8a8a; border-right: 2px solid #999; background: #fff; }
  .net text { font-family: "Liberation Sans", sans-serif; font-size: 16px; letter-spacing: -0.6px; text-anchor: middle; fill: #222; stroke: #222; stroke-width: .35px; font-stretch: normal; }
  footer { height: 78px; box-sizing: border-box; border-top: 3px solid #d0d0d0; border-bottom: 3px solid #d0d0d0; background: #efefef; display: flex; }
  .sep { box-shadow: -2px 0 #d4d4d4; }
  .file { flex: 1; padding-left: 24px; line-height: 73px; white-space: nowrap; letter-spacing: 0.07px; }
  .cnt text { fill: #a0a0a0; font-size: 27px; }

  .dialog { position: absolute; left: 998px; top: 780px; width: 1400px; height: 1214px; box-sizing: border-box; border: 3px solid #8c8c8c; background: #f0f0f0; box-shadow: 4px 4px 20px rgba(0, 0, 0, .35); }
  .title { height: 78px; box-sizing: border-box; background: #fff; display: flex; align-items: center; font-family: "Open Sans", sans-serif; font-stretch: normal; font-size: 30px; letter-spacing: 0.05px; color: #000; padding: 0 31px 0 26px; gap: 12px; }
  .close { margin: 0 0 7px auto; }
  .title :global(.tic) { width: 29px; height: 33px; color: #ec8a34; }
  .chart text { font-size: 28px; fill: #222; }
  .chart .g { fill: #a8a8a8; }
  .chart .ns { font-weight: bold; font-size: 27px; fill: #000; }
  fieldset { margin: 11px 56px 0 58px; width: 1279px; height: 258px; box-sizing: border-box; padding: 0; border: 2px solid #dcdcdc; min-width: 0; }
  legend { height: 40px; line-height: 43px; margin-left: 5px; padding: 0 7px 0 6px; letter-spacing: -0.22px; }
  .frow { display: flex; align-items: center; margin-top: 34px; }
  .frow.second { margin-top: 17px; }
  label { width: 230px; text-align: right; margin-right: 14px; padding-bottom: 2px; box-sizing: border-box; letter-spacing: -0.25px; white-space: nowrap; }
  .spin { width: 259px; height: 64px; box-sizing: border-box; border: 3px solid #abadb3; background: #fff; display: flex; padding: 3px; }
  .field { flex: 1; background: #f0f0f0; color: #a0a0a0; text-align: right; padding-right: 9px; line-height: 50px; margin: 2px 0; }
  .arrows { display: flex; flex-direction: column; background: #f0f0f0; margin: -2px; }
  .arrows svg { border: 2px solid #dcdcdc; box-sizing: border-box; width: 39px; height: 28px; }
  .btn { height: 55px; box-sizing: border-box; border: 2px solid #adadad; background: #e1e1e1; text-align: center; line-height: 50px; width: 164px; letter-spacing: -0.5px; padding-right: 1px; }
  .focus { width: 314px; margin-left: 56px; margin-right: 58px; background: #e3e9ef; border: 4px solid #0078d7; line-height: 45px; outline: 2px dotted #222; outline-offset: -7px; letter-spacing: 0.2px; padding-right: 4px; }
  .add { width: 128px; margin-right: 20px; } .del { width: 160px; }
  .ok { display: flex; justify-content: flex-end; gap: 21px; padding: 54px 27px 0 0; }
  .cancel { padding-right: 5px; letter-spacing: -0.2px; }

  .marks { position: absolute; left: 0; top: 0; pointer-events: none; }
</style>
